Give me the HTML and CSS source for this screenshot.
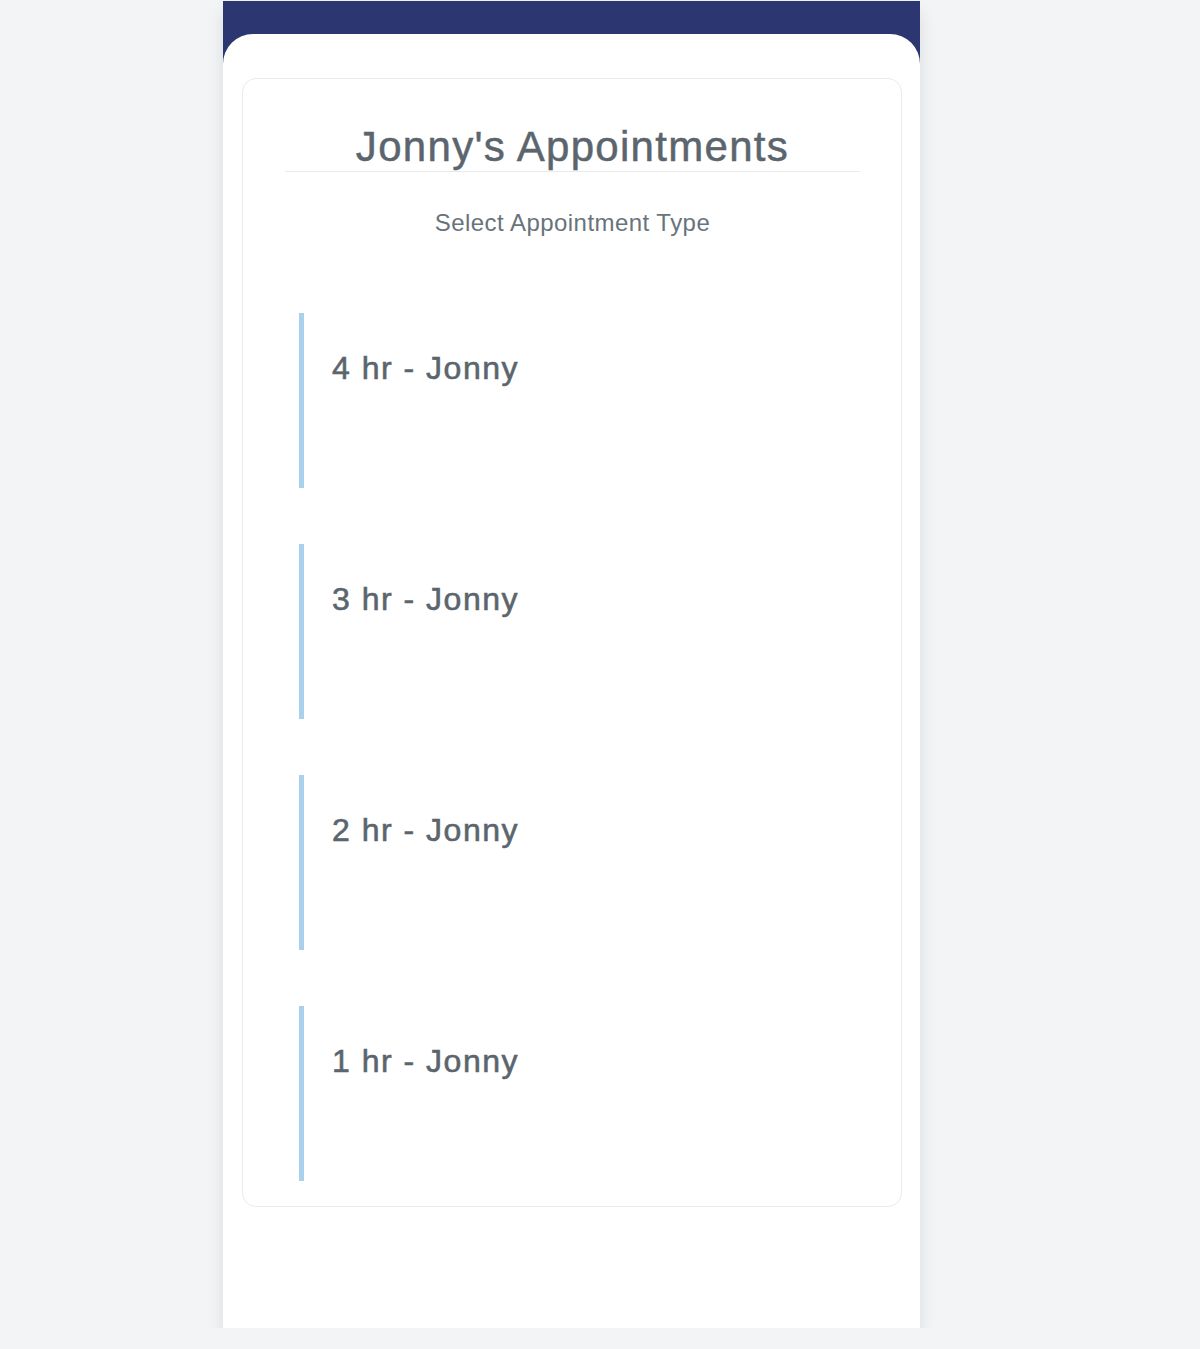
FILE: index.html
```html
<!DOCTYPE html>
<html>
<head>
<meta charset="utf-8">
<link rel="stylesheet" href="styles.css">
</head>
<body>
<div class="phone">
  <div class="panel">
    <div class="card">
      <h1 class="title">Jonny's Appointments</h1>
      <p class="subtitle">Select Appointment Type</p>
      <ul class="types">
        <li class="type">4 hr - Jonny</li>
        <li class="type">3 hr - Jonny</li>
        <li class="type">2 hr - Jonny</li>
        <li class="type">1 hr - Jonny</li>
      </ul>
    </div>
  </div>
</div>
</body>
</html>
```
FILE: styles.css
```css
html, body {
  margin: 0;
  padding: 0;
  background: #f3f4f6;
  font-family: "Liberation Sans", Arial, sans-serif;
}
.phone {
  margin: 1px 0 0 223px;
  padding-top: 33px;
  width: 697px;
  height: 1327px;
  box-sizing: border-box;
  background: #2c3670;
  box-shadow: 0 10px 16px rgba(0, 0, 0, 0.1);
}
.panel {
  height: 1294px;
  background: #ffffff;
  border-radius: 30px 30px 0 0;
  padding: 44px 18px 0 19px;
  box-sizing: border-box;
}
.card {
  border: 1px solid #e9ebee;
  border-radius: 14px;
  height: 1129px;
  box-sizing: border-box;
  padding: 44px 41px 28px 42px;
}
.title {
  margin: 0;
  font-size: 42px;
  line-height: 48px;
  font-weight: normal;
  letter-spacing: 1.3px;
  -webkit-text-stroke: 0.5px #5b656d;
  color: #5b656d;
  text-align: center;
  border-bottom: 1px solid #e8eaec;
}
.subtitle {
  margin: 37px 0 0;
  font-size: 24px;
  line-height: 28px;
  letter-spacing: 0.45px;
  color: #69737a;
  text-align: center;
}
.types {
  list-style: none;
  margin: 76px 0 0 14px;
  padding: 0;
  display: flex;
  flex-direction: column;
  gap: 56px;
}
.type {
  height: 175px;
  box-sizing: border-box;
  border-left: 5px solid #a9d1ee;
  padding: 36px 0 0 28px;
  font-size: 32px;
  line-height: 38px;
  letter-spacing: 1.5px;
  -webkit-text-stroke: 0.6px #5b656d;
  color: #5b656d;
}
```
